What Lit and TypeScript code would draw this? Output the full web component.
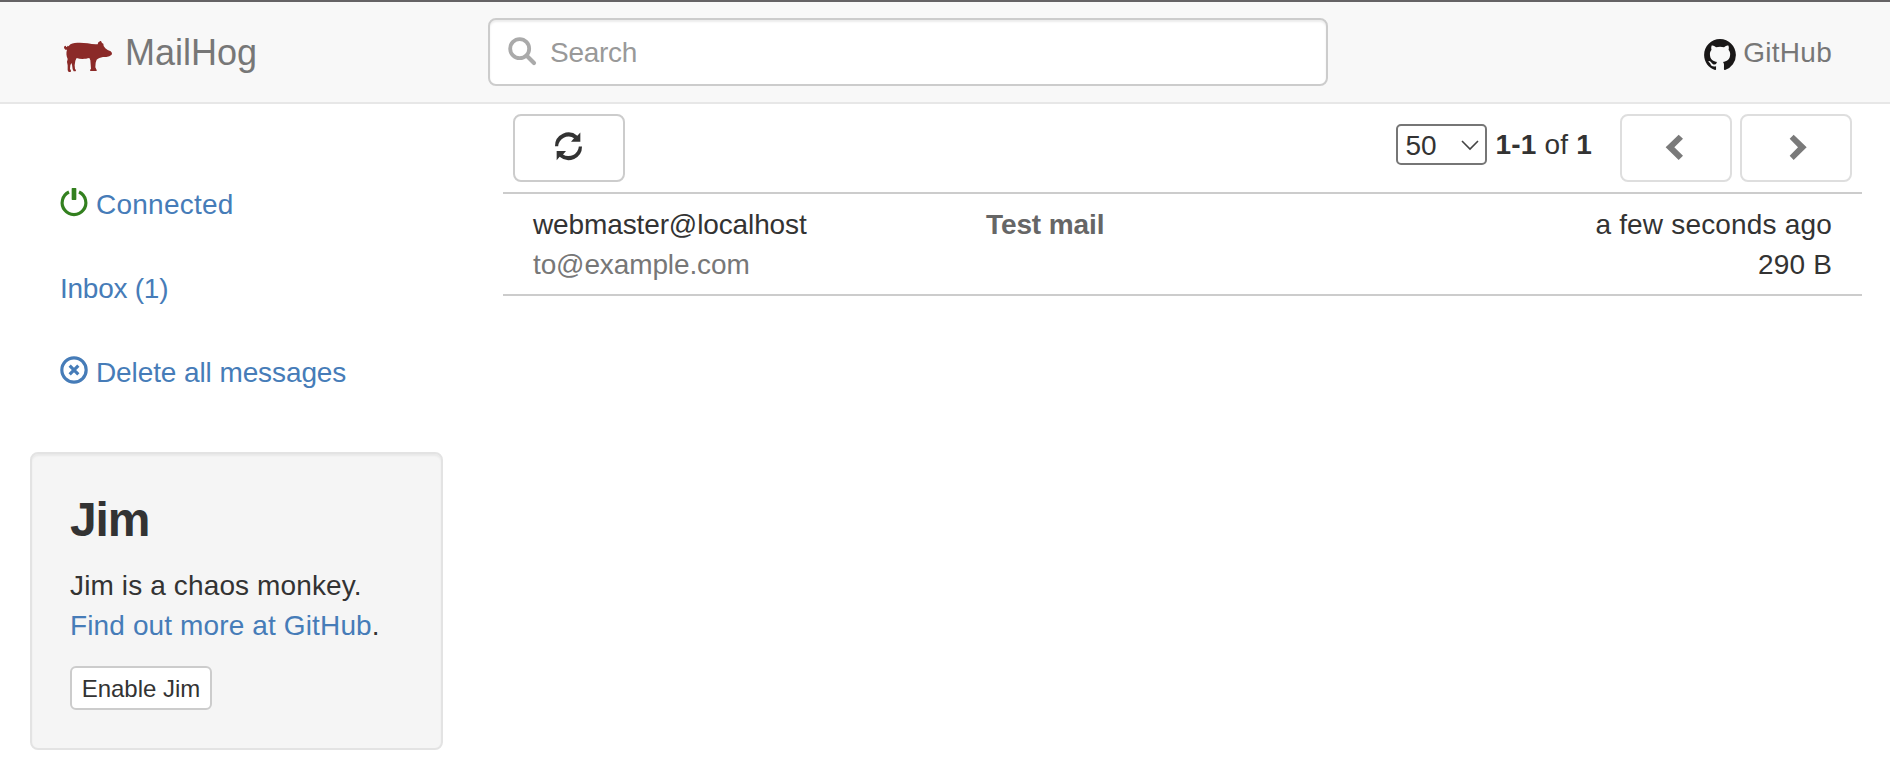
import { LitElement, html, css, svg } from "lit";
import { customElement, state } from "lit/decorators.js";

interface Message {
  from: string;
  to: string;
  subject: string;
  age: string;
  size: string;
}

const pig = html`<svg class="pig" viewBox="72 120 144 96">
  <path fill="#8b2a28" d="M81 149 L76 149 L72 144 L73 139 L77 137 L79 141 L82 141 L81 137 L85 139 L87 137
    C92 131 101 129 112 128.500 C122 127.500 133 129 143 130 C153 132 162 133 173 132.500
    L175 127 L181 123 L183 123 L186 129 L190 131 L191 138 L196 145 L203 150 L212 154 L216 159
    L215 164 L208 169 L199 171 L189 171 C181 173 175 175 170 179 L167 188 L166 202 L170 210 L170 213
    L151 213 L150 210 L153 206 L151 181 L148 174 C137 177 121 178 110 174 L106 182 L104 196
    L105 206 L108 211 L107 214 L101 214 L98 208 L96 194 L94 189 L91 196 L90 206 L93 212
    L92 216 L86 216 L83 211 L83 196 L81 186 L83 177 C79 168 78 158 81 149 Z"/>
</svg>`;

const octocat = html`<svg class="octocat" viewBox="0 0 16 15.610">
  <path fill="#191717" d="M8 0C3.580 0 0 3.580 0 8c0 3.540 2.290 6.530 5.470 7.590.4.070.55-.17.55-.38 0-.19-.01-.82-.01-1.490-2.010.37-2.530-.49-2.690-.94-.09-.23-.48-.94-.82-1.130-.28-.15-.68-.52-.01-.53.63-.01 1.080.58 1.230.82.72 1.210 1.870.87 2.330.66.07-.52.28-.87.51-1.070-1.780-.2-3.640-.89-3.640-3.950 0-.87.31-1.590.82-2.150-.08-.2-.36-1.020.08-2.120 0 0 .67-.21 2.200.82.64-.18 1.320-.27 2-.27s1.360.09 2 .27c1.530-1.040 2.200-.82 2.200-.82.44 1.100.16 1.920.08 2.120.51.56.82 1.270.82 2.150 0 3.070-1.870 3.750-3.650 3.950.29.25.54.73.54 1.480 0 1.070-.01 1.930-.01 2.200 0 .21.15.46.55.38A8.010 8.010 0 0 0 16 8c0-4.420-3.580-8-8-8z"/>
</svg>`;

const icon = (body: unknown) => html`<svg class="glyph" viewBox="0 0 84 84">${body}</svg>`;

const arrow = "M0 42.5 A40.5 40.5 0 0 1 67 11.5 L76 1.5 L76 29 L48 29 L57 18.5 A31 31 0 0 0 9.5 42.5 Z";

const glyphs = {
  search: svg`<circle cx="35" cy="35" r="28.500" fill="none" stroke="currentColor" stroke-width="11.500"/>
    <path d="M57 57 L78 78" stroke="currentColor" stroke-width="12.500" stroke-linecap="round"/>`,
  refresh: svg`<path fill="currentColor" d=${arrow} />
    <path fill="currentColor" transform="rotate(180 40.500 43)" d=${arrow} />`,
  off: svg`<path d="M27 12 A35.500 35.500 0 1 0 57 12" fill="none" stroke="currentColor" stroke-width="9.500"/>
    <rect x="35" y="0" width="14" height="36" rx="2" fill="currentColor"/>`,
  remove: svg`<circle cx="42" cy="42" r="36.500" fill="none" stroke="currentColor" stroke-width="9.500"/>
    <path d="M29 29 L55 55 M55 29 L29 55" stroke="currentColor" stroke-width="9.500"/>`,
  left: svg`<path d="M50 2 L63 14.500 L37 40 L63 65.500 L50 78 L11 40 Z" fill="currentColor"/>`,
  right: svg`<path d="M35 2 L23 14.500 L48 40 L23 65.500 L35 78 L74 40 Z" fill="currentColor"/>`,
};

@customElement("app-root")
export class AppRoot extends LitElement {
  @state() private messages: Message[] = [
    { from: "webmaster@localhost", to: "to@example.com", subject: "Test mail", age: "a few seconds ago", size: "290 B" },
  ];

  static styles = css`
    :host { display: block; height: 780px; overflow: hidden; background: #fff; color: #333;
      font: 28px/40px "Liberation Sans", Arial, sans-serif; }
    * { box-sizing: border-box; }
    a { color: #467cb8; text-decoration: none; }
    svg { display: block; flex: none; overflow: visible; }
    .glyph { width: 28px; height: 28px; }
    header { height: 104px; border-top: 2px solid #656365; border-bottom: 2px solid #e7e7e7; background: #f8f8f8;
      display: grid; grid-template-columns: 488px 840px 1fr; align-items: center; }
    .brand { display: flex; align-items: center; padding: 1px 0 0 64px; gap: 13px; font-size: 36px; color: #777; }
    .pig { width: 48px; height: 32px; margin-top: 7px; }
    .search { height: 68px; border: 2px solid #ccc; border-radius: 8px; background: #fff; color: #999;
      box-shadow: inset 0 2px 2px rgba(0,0,0,.075); display: flex; padding: 13px 18px; letter-spacing: -.3px; }
    .search .glyph { margin: 4px 14px 0 0; color: #aaa; }
    .github { justify-self: end; display: flex; align-items: center; gap: 7px; padding: 2px 58px 0 0; color: #777;
      letter-spacing: .25px; }
    .octocat { width: 32px; height: 31px; margin-top: 3px; }
    main { display: grid; grid-template-columns: 473px 1359px; padding-left: 30px; }
    aside { padding-top: 60px; width: 413px; }
    nav { display: flex; flex-direction: column; gap: 4px; }
    nav a { display: flex; gap: 8px; padding: 21px 30px 19px; height: 80px; }
    nav .glyph { margin-top: 3px; }
    .on { color: #33801f; }
    .connected { letter-spacing: .25px; }
    .inbox { letter-spacing: -.25px; }
    .delete { letter-spacing: -.1px; }
    .well { margin-top: 40px; height: 298px; background: #f5f5f5; border: 2px solid #e3e3e3; border-radius: 8px;
      padding: 39px 38px 37px; box-shadow: inset 0 2px 2px rgba(0,0,0,.05); }
    h2 { margin: 0 0 20px; font-size: 48px; line-height: 53px; font-weight: 700; letter-spacing: -1.2px; }
    p { margin: 0 0 20px; letter-spacing: .13px; }
    button { font: inherit; color: #333; background: #fff; border: 2px solid #ccc; border-radius: 8px; padding: 0;
      display: flex; align-items: center; justify-content: center; }
    .tool { width: 112px; height: 68px; }
    .tool[disabled] { color: #7a7a7a; border-color: #dedede; }
    .small { width: 142px; height: 44px; border-radius: 6px; font-size: 24px; line-height: 36px; padding-top: 2px; }
    .bar { display: flex; padding: 10px; height: 88px; align-items: flex-start; }
    .refresh { margin-bottom: 5px; }
    .count { margin: 10px 0 0 auto; display: flex; gap: 8px; }
    .range { padding-top: 1px; letter-spacing: .2px; }
    .pager { display: flex; gap: 8px; margin-left: 28px; }
    .limit { display: flex; justify-content: space-between; align-items: center; width: 91px; height: 41px;
      border: 2px solid #767676; border-radius: 5px; padding: 2px 6px 0 7px; }
    .limit svg { width: 18px; height: 10px; margin-bottom: 2px; }
    .row { display: grid; grid-template-columns: 453px 1fr 300px; border: solid #ccc; border-width: 2px 0;
      padding: 11px 30px 9px; height: 104px; }
    .from, .to { letter-spacing: -.12px; }
    .to { color: #777; }
    .subject { font-weight: 700; color: #666; letter-spacing: -.1px; }
    .meta { text-align: right; letter-spacing: .18px; }
  `;

  render() {
    return html`
      <header>
        <div class="brand">${pig}<span class="name">MailHog</span></div>
        <div class="search">${icon(glyphs.search)}<span>Search</span></div>
        <div class="github">${octocat}<span>GitHub</span></div>
      </header>
      <main>
        <aside>
          <nav>
            <a><span class="on">${icon(glyphs.off)}</span><span class="connected">Connected</span></a>
            <a><span class="inbox">Inbox (${this.messages.length})</span></a>
            <a>${icon(glyphs.remove)}<span class="delete">Delete all messages</span></a>
          </nav>
          <section class="well">
            <h2>Jim</h2>
            <p>Jim is a chaos monkey.<br /><a>Find out more at GitHub</a>.</p>
            <button class="small">Enable Jim</button>
          </section>
        </aside>
        <section>
          <div class="bar">
            <button class="tool"><span class="refresh">${icon(glyphs.refresh)}</span></button>
            <div class="count">
              <div class="limit">50
                <svg viewBox="0 0 18 10"><path d="M1 1 L9 9 L17 1" fill="none" stroke="#444" stroke-width="1.600"/></svg>
              </div>
              <span class="range"><b>1-1</b> of <b>${this.messages.length}</b></span>
            </div>
            <div class="pager">
              <button class="tool" disabled>${icon(glyphs.left)}</button>
              <button class="tool" disabled>${icon(glyphs.right)}</button>
            </div>
          </div>
          ${this.messages.map(
            (m) => html`<div class="row">
              <div><div class="from">${m.from}</div><div class="to">${m.to}</div></div>
              <div class="subject">${m.subject}</div>
              <div class="meta">${m.age}<br />${m.size}</div>
            </div>`
          )}
        </section>
      </main>
    `;
  }
}
